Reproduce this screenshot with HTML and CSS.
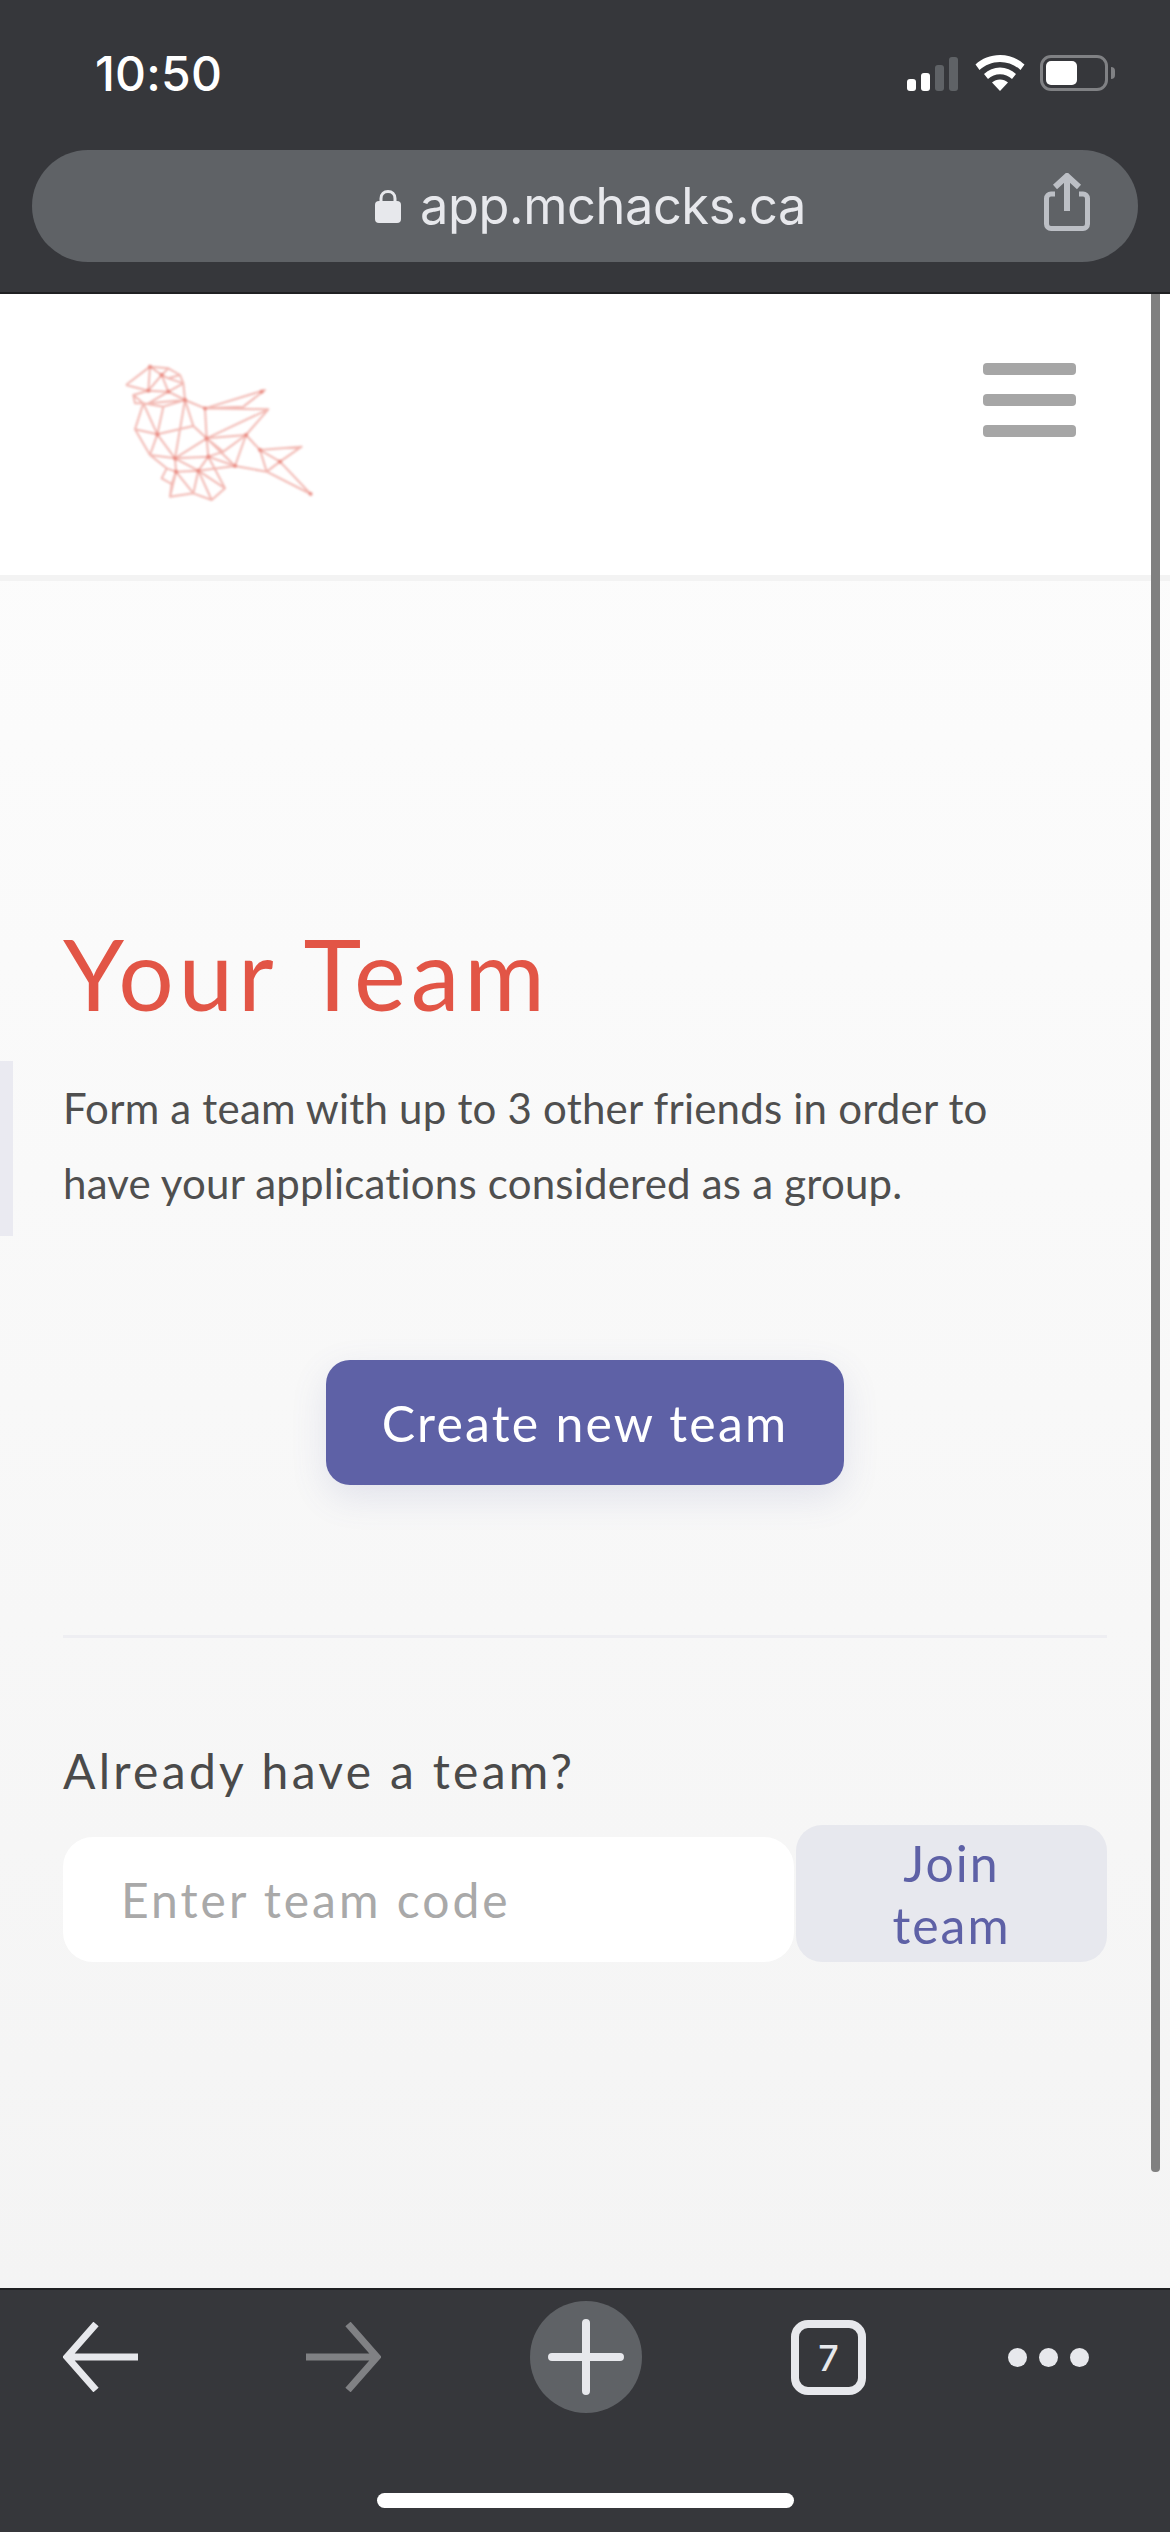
FILE: index.html
```html
<!DOCTYPE html>
<html lang="en">
<head>
<meta charset="utf-8">
<title>Your Team</title>
<link rel="stylesheet" href="styles.css">
</head>
<body>
<div class="phone">
  <div class="chrome-top">
    <div class="status">
      <span class="time">10:50</span>
      <div class="status-icons">
        <div class="signal"><i class="b1"></i><i class="b2"></i><i class="b3"></i><i class="b4"></i></div>
        <svg class="wifi" width="50" height="36" viewBox="0 0 50 36"><path d="M25 0C15.500 0 7 3.500 0.500 9.500L4.500 15C10 10 17 7 25 7S40 10 45.500 15L49.500 9.500C43 3.500 34.500 0 25 0Z" fill="#fff"/><path d="M25 12.500C19 12.500 13.500 14.800 9 19L13 24C16.300 21 20.500 19.300 25 19.300S33.700 21 37 24L41 19C36.500 14.800 31 12.500 25 12.500Z" fill="#fff"/><path d="M25 24.500C22 24.500 19.300 25.600 17 27.600L25 36L33 27.600C30.700 25.600 28 24.500 25 24.500Z" fill="#fff"/></svg>
        <div class="battery"><div class="battery-body"><div class="battery-fill"></div></div><div class="battery-nub"></div></div>
      </div>
    </div>
    <div class="urlbar">
      <div class="url">
        <svg class="lock" width="26" height="33" viewBox="0 0 26 33"><path d="M6 14V8.500C6 4 9 1.500 13 1.500S20 4 20 8.500V14" fill="none" stroke="#e7e8ec" stroke-width="3"/><rect x="0" y="11" width="26" height="22" rx="4" fill="#e7e8ec"/></svg>
        <span class="url-text">app.mchacks.ca</span>
      </div>
      <svg class="share" width="46" height="58" viewBox="0 0 46 58"><path d="M11 21H7A4.500 4.500 0 0 0 2.500 25.500V51A4.500 4.500 0 0 0 7 55.500H39A4.500 4.500 0 0 0 43.500 51V25.500A4.500 4.500 0 0 0 39 21H35" fill="none" stroke="#bcbfc5" stroke-width="5"/><path d="M23 38V4M11 14L23 3L35 14" fill="none" stroke="#bcbfc5" stroke-width="6"/></svg>
    </div>
  </div>

  <div class="page">
    <header class="site-header">
      <svg class="logo" width="240" height="170" viewBox="0 0 720 510">
        <path class="bird" d="M78 135L150 80L205 85L240 105L250 130L255 180L315 205L495 150L430 200L315 205L505 208L320 295L280 258L255 180L205 155L145 152L78 135M150 80L145 152L185 105L205 155L250 130L205 115L185 105L150 80M205 85L185 105M240 105L205 115M145 152L100 165L130 190L190 200L255 180L145 190L205 155M100 165L105 190L130 190M130 190L105 268L172 283L130 190M190 200L172 283L280 258L320 295L225 355L172 283L150 345L105 268M255 180L225 355M315 205L320 295L325 350L225 355L150 345L200 385L228 395L225 355L295 392L325 350L405 378L320 295L438 285L505 208M438 285L405 378M438 285L480 330L605 320L540 365L632 462L500 395L405 378L295 392L228 395M480 330L540 365M480 330L500 395L540 365M320 295L370 335L325 350M200 385L185 415L215 432L228 395L280 460L295 392L335 480L375 445L325 350M215 432L210 470L280 460L335 480M228 395L210 470M295 392L375 445M438 285L370 335"/>
        <path class="nodes" d="M150 80h0M145 152h0M205 155h0M255 180h0M185 105h0M172 283h0M225 355h0M320 295h0M325 350h0M438 285h0M405 378h0M540 365h0M480 330h0M295 392h0M228 395h0M485 155h0M632 462h0M315 205h0"/>
      </svg>
      <button class="menu" aria-label="Menu"><i></i><i></i><i></i></button>
    </header>

    <main class="content">
      <h1 class="title">Your Team</h1>
      <p class="lead">Form a team with up to 3 other friends in order to have your applications considered as a group.</p>
      <div class="create-row"><button class="create">Create new team</button></div>
      <hr class="divider">
      <h2 class="already">Already have a team?</h2>
      <form class="join-form">
        <input class="code" type="text" placeholder="Enter team code">
        <button class="join" type="button">Join team</button>
      </form>
    </main>
    <div class="side-tab"></div>
    <div class="scrollbar"></div>
  </div>

  <div class="chrome-bottom">
    <div class="toolbar">
      <svg class="back" width="76" height="70" viewBox="0 0 76 70"><path d="M75 35H6M33 2L4 35L33 68" fill="none" stroke="#e7e8ec" stroke-width="7"/></svg>
      <svg class="forward" width="76" height="70" viewBox="0 0 76 70"><path d="M1 35H70M43 2L72 35L43 68" fill="none" stroke="#808184" stroke-width="7"/></svg>
      <div class="new-tab"><svg width="76" height="76" viewBox="0 0 76 76"><path d="M38 4V72M4 38H72" fill="none" stroke="#e7e8ec" stroke-width="8" stroke-linecap="round"/></svg></div>
      <div class="tabs"><span>7</span></div>
      <div class="dots"><i></i><i></i><i></i></div>
    </div>
    <div class="home"></div>
  </div>
</div>
</body>
</html>
```

FILE: styles.css
```css
* { box-sizing: border-box; }
html, body { margin: 0; padding: 0; }
body { width: 1170px; height: 2532px; overflow: hidden; font-family: "Lato", "Liberation Sans", sans-serif; background: #36373b; }
.phone { width: 1170px; height: 2532px; display: flex; flex-direction: column; }

.chrome-top { height: 294px; flex: none; background: #36373b; border-bottom: 2px solid #1f2022; padding: 0 32px; }
.status { height: 150px; display: flex; justify-content: space-between; align-items: flex-start; padding: 45px 0 0 63px; }
.time { font-family: "Inter", "Liberation Sans", sans-serif; font-size: 48px; line-height: 58px; font-weight: 500; color: #fff; letter-spacing: 0.2px; }
.status-icons { display: flex; align-items: flex-end; margin: 10px 23px 0 0; height: 36px; }
.signal { display: flex; align-items: flex-end; gap: 5px; width: 68px; height: 35px; }
.signal i { display: block; width: 9px; border-radius: 3px; background: #fff; }
.signal .b1 { height: 12px; }
.signal .b2 { height: 18px; }
.signal .b3 { height: 26px; background: #5f6266; }
.signal .b4 { height: 34px; background: #5f6266; }
.wifi { flex: none; }
.battery { display: flex; align-items: center; margin-left: 15px; }
.battery-body { width: 68px; height: 36px; border: 3px solid #808184; border-radius: 11px; padding: 3px; }
.battery-fill { width: 31px; height: 24px; background: #fff; border-radius: 5px; }
.battery-nub { width: 4px; height: 12px; margin-left: 3px; background: #808184; border-radius: 0 4px 4px 0; }

.urlbar { height: 112px; border-radius: 56px; background: #5f6266; display: flex; align-items: center; justify-content: center; position: relative; }
.url { display: flex; align-items: center; gap: 19px; margin-left: 11px; }
.lock { flex: none; }
.url-text { font-family: "Inter", "Liberation Sans", sans-serif; font-size: 50.500px; line-height: 60px; color: #e7e8ec; letter-spacing: -0.4px; }
.share { position: absolute; right: 48px; top: 23px; }

.page { flex: 1; position: relative; display: flex; flex-direction: column; background: linear-gradient(#fdfdfd, #f4f4f4); overflow: hidden; }
.site-header { height: 287px; flex: none; background: #fff; border-bottom: 6px solid #f3f3f3; display: flex; justify-content: space-between; padding: 46px 94px 0 100px; }
.logo { filter: blur(0.8px); }
.bird { fill: none; stroke: #e0574a; stroke-opacity: .42; stroke-width: 6; stroke-linejoin: round; }
.nodes { fill: none; stroke: #e0574a; stroke-opacity: .45; stroke-width: 13; stroke-linecap: round; }
.menu { width: 93px; height: 74px; padding: 0; margin: 23px 0 0; border: 0; background: none; display: flex; flex-direction: column; justify-content: space-between; }
.menu i { display: block; height: 12px; border-radius: 4px; background: #a6a6a6; }

.content { padding: 332px 63px 0; }
.title { margin: 0; font-size: 98px; line-height: 120px; font-weight: 400; color: #e25546; letter-spacing: 4.800px; }
.lead { margin: 38px 0 0; width: 960px; font-size: 42px; line-height: 75px; color: #4f4f4f; letter-spacing: 0.2px; }
.create-row { display: flex; justify-content: center; margin-top: 139px; }
.create { width: 518px; height: 125px; border: 0; border-radius: 24px; background: #5e61a6; color: #fff; font-family: inherit; font-size: 50px; letter-spacing: 2.200px; box-shadow: 0 12px 36px rgba(94, 97, 166, .14); }
.divider { margin: 150px 0 0; border: 0; height: 3px; background: #eeeef2; }
.already { margin: 103px 0 0; font-size: 48px; line-height: 60px; font-weight: 400; color: #4a4a4a; letter-spacing: 3.300px; }
.join-form { display: flex; align-items: flex-end; margin-top: 24px; }
.code { width: 731px; height: 125px; flex: none; border: 0; border-radius: 30px; background: #fff; padding: 0 58px; font-family: inherit; font-size: 48px; letter-spacing: 3px; color: #4a4a4a; }
.code::placeholder { color: #a9a9a9; opacity: 1; }
.join { width: 311px; margin-left: 2px; flex: none; height: 137px; border: 0; border-radius: 26px; background: #e7e8ee; color: #5e61a6; font-family: inherit; font-size: 50px; line-height: 62px; padding: 0 50px; letter-spacing: 2px; }

.side-tab { position: absolute; left: 0; top: 767px; width: 13px; height: 175px; background: #eaeaf1; }
.scrollbar { position: absolute; left: 1151px; top: 0; width: 9px; height: 1878px; background: #808080; border-radius: 0 0 4px 4px; }

.chrome-bottom { height: 244px; flex: none; background: #36373b; border-top: 2px solid #1f2022; display: flex; flex-direction: column; }
.toolbar { height: 203px; padding: 11px 0 0 63px; display: flex; align-items: flex-start; }
.back, .forward { flex: none; margin-top: 21px; }
.forward { margin-left: 166px; }
.new-tab { flex: none; margin-left: 149px; width: 112px; height: 112px; border-radius: 50%; background: #5f6266; display: flex; align-items: center; justify-content: center; }
.tabs { flex: none; margin: 19px 0 0 149px; width: 75px; height: 75px; border: 8px solid #e7e8ec; border-radius: 17px; color: #e7e8ec; display: flex; align-items: center; justify-content: center; font-family: "Inter", sans-serif; font-size: 36px; font-weight: 500; }
.dots { flex: none; margin: 47px 0 0 142px; display: flex; gap: 12px; }
.dots i { display: block; width: 19px; height: 19px; border-radius: 50%; background: #e7e8ec; }
.home { width: 417px; height: 15px; margin: 0 auto; border-radius: 8px; background: #fff; }
```
